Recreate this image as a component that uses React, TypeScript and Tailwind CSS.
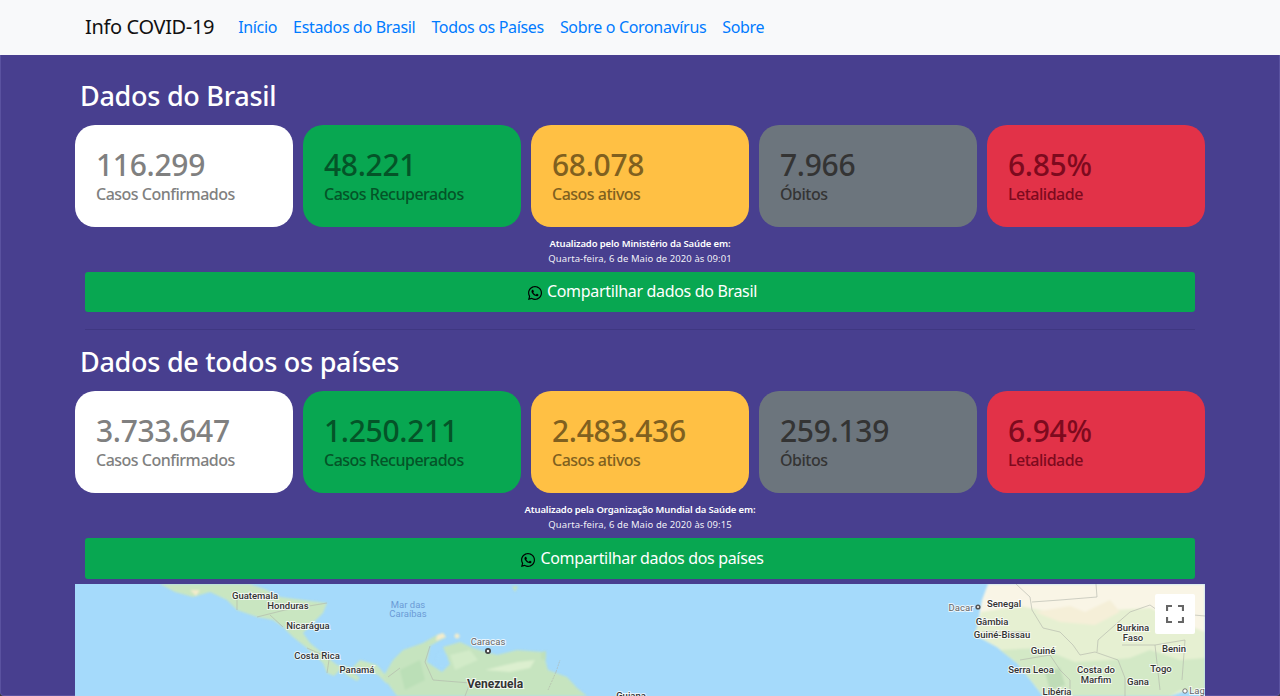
import { FaWhatsapp } from "react-icons/fa";

const FONT = "font-['Noto_Sans','Open_Sans',sans-serif]";

type CardData = { value: string; label: string; bg: string; fg: string };

function Card({ value, label, bg, fg }: CardData) {
  return (
    <div className={`flex-1 h-[102px] rounded-[20px] pl-[21px] pt-[20px] ${bg} ${fg}`}>
      <div className="text-[30px] leading-[40px] font-medium tracking-[-0.3px]">{value}</div>
      <div className="text-[16px] leading-[20px] font-medium tracking-[-0.5px] mt-[-1px]">{label}</div>
    </div>
  );
}

function Section({ title, cards, source, date, share, btn }: { title: string; cards: CardData[]; source: string; date: string; share: string; btn: string }) {
  return (
    <section>
      <h2 className="h-[34px] ml-[5px] text-[27px] leading-[34px] font-medium text-white tracking-[-0.28px]">{title}</h2>
      <div className="flex gap-[10px] mt-[12px]">
        {cards.map((c) => (
          <Card key={c.label} {...c} />
        ))}
      </div>
      <div className="mt-[9px] h-[31px] text-center text-white text-[9.5px] leading-[15px]">
        <div className="font-semibold tracking-[-0.12px]">{source}</div>
        <div className="text-white/95 tracking-[0.08px]">{date}</div>
      </div>
      <button className={`mt-[5px] mx-[10px] w-[1110px] ${btn} rounded-[3px] bg-[#08a751] text-white text-[16px] flex items-center justify-center gap-[4px] tracking-[-0.33px] pb-[2px] pl-[4px]`}>
        <FaWhatsapp className="text-black w-[16px] h-[16px] mt-[4px]" />
        {share}
      </button>
    </section>
  );
}

type L = { x: number; y: number; t: string; size?: number; fill?: string; w?: number; halo?: number };

const labels: L[] = [
  { x: 255, y: 595, t: "Guatemala" },
  { x: 288, y: 605.5, t: "Honduras" },
  { x: 308, y: 625.5, t: "Nicarágua" },
  { x: 317, y: 655, t: "Costa Rica" },
  { x: 357, y: 669.5, t: "Panamá" },
  { x: 408, y: 604.5, t: "Mar das", fill: "#6b9bd6", w: 400, halo: 0 },
  { x: 408, y: 613.5, t: "Caraíbas", fill: "#6b9bd6", w: 400, halo: 0 },
  { x: 488, y: 641, t: "Caracas", fill: "#666", w: 400 },
  { x: 495, y: 684, t: "Venezuela", size: 12, w: 700 },
  { x: 631, y: 695.5, t: "Guiana" },
  { x: 1004, y: 603.5, t: "Senegal" },
  { x: 961, y: 607.5, t: "Dacar", fill: "#666", w: 400 },
  { x: 992, y: 621.5, t: "Gâmbia" },
  { x: 1002, y: 634.5, t: "Guiné-Bissau" },
  { x: 1043, y: 650.5, t: "Guiné" },
  { x: 1031, y: 669.5, t: "Serra Leoa" },
  { x: 1096, y: 669.5, t: "Costa do" },
  { x: 1096, y: 679, t: "Marfim" },
  { x: 1057, y: 691.5, t: "Libéria" },
  { x: 1133, y: 627.5, t: "Burkina" },
  { x: 1133, y: 637, t: "Faso" },
  { x: 1174, y: 648.5, t: "Benin" },
  { x: 1161, y: 668.5, t: "Togo" },
  { x: 1138, y: 681.5, t: "Gana" },
  { x: 1197, y: 690.5, t: "Lag", fill: "#666", w: 400 },
];

function MapDrawing() {
  return (
    <svg viewBox="75 584 1130 112" className="block w-[1130px] h-[112px]">
      <rect x="75" y="584" width="1130" height="112" fill="#a5dafb" />
      <g style={{ filter: "blur(0.8px)" }}>
        {/* Central America */}
        <path d="M160 584 L175 592 L193 597 L210 592 L227 600 L237 610 L257 617 L273 620 L283 627 L293 637 L307 648 L323 663 L327 673 L334 676 L340 670 L350 677 L357 681 L360 678 L350 670 L360 660 L377 665 L387 677 L387 684 L378 675 L366 670 L337 665 L327 657 L310 643 L303 633 L313 623 L323 613 L327 603 L280 597 L267 590 L250 584 Z" fill="#c9e6c1" />
        <path d="M190 590 L196 596 L200 590 Z" fill="#f3eccc" />
        {/* South America */}
        <path d="M383 677 L393 660 L403 650 L423 643 L437 635 L443 633 L446 637 L430 646 L427 662 L436 668 L442 672 L450 664 L443 647 L460 642 L473 648 L497 655 L517 650 L543 652 L548 670 L567 677 L577 688 L587 696 L397 696 Z" fill="#c6e4bf" />
        <ellipse cx="442" cy="660" rx="6" ry="8" fill="#a5dafb" />
        <path d="M437 635 L443 633 L446 637 L436 641 Z" fill="#f3eccc" />
        <circle cx="457" cy="636" r="2.5" fill="#f3eccc" />
        <path d="M400 670 L420 660 L425 680 L405 690 Z" fill="#bbdfb7" />
        <path d="M450 655 L470 650 L478 660 L455 670 Z" fill="#d2ebc8" />
        <path d="M485 670 L510 672 L530 668 L535 660 L518 662 L505 665 Z" fill="#dcefcf" />
        <path d="M541 652 L546 651 L546 660 L541 659 Z" fill="#bfe0bb" />
        <path d="M512 586 L515 592 L518 586 Z" fill="#c3e3bd" />
        {/* West Africa */}
        <path d="M988 584 L982 600 L980 610 L978 623 L975 635 L997 647 L1017 663 L1033 683 L1043 696 L1170 696 L1185 691 L1205 693 L1205 584 Z" fill="#f9f5e6" />
        <path d="M981 612 L1020 606 L1050 612 L1090 620 L1115 610 L1150 608 L1180 622 L1205 632 L1205 694 L1185 691 L1170 696 L1043 696 L1033 683 L1017 663 L997 647 L975 635 Z" fill="#e6f0d2" />
        <path d="M1035 612 L1070 606 L1085 612 L1110 600 L1120 612 L1095 625 L1060 622 Z" fill="#f5efd8" />
        <path d="M1000 650 L1040 648 L1075 662 L1110 660 L1130 658 L1150 650 L1180 660 L1205 658 L1205 690 L1180 690 L1170 696 L1043 696 L1033 683 L1017 663 Z" fill="#d3e9c6" />
        <path d="M1045 672 L1060 668 L1065 685 L1050 690 Z" fill="#bfdcb7" />
        <path d="M1176 696 L1186 692 L1205 693 L1205 696 Z" fill="#a5dafb" />
      </g>
      <g fill="none" stroke="#b0b4aa" strokeWidth="0.6" style={{ filter: "blur(0.3px)" }}>
        <path d="M1016 584 L1030 597 L1032 610 L1043 628 L1060 632 L1073 645 L1080 655 L1095 652 L1118 660 L1125 678 L1125 696" />
        <path d="M1096 584 L1097 597 L1060 600 L1032 602" />
        <path d="M982 632 L1030 632" />
        <path d="M1097 652 L1098 640 L1115 625 L1130 612 L1150 605 L1160 612 L1205 616" />
        <path d="M1122 645 L1155 645 L1160 690" />
        <path d="M1155 645 L1185 640 L1182 680" />
        <path d="M1020 660 L1050 655 L1060 670 L1070 680 L1070 696" />
        <path d="M237 600 L237 610 M257 617 L285 610 L327 603 M283 627 L270 615 M307 648 L327 657 M327 673 L329 660" />
        <path d="M388 677 L400 668 M430 646 L425 662 L433 680 L470 683 L465 696" />
        <path d="M556 672 L548 690 M556 672 L560 660" strokeDasharray="2 1" />
      </g>
      <circle cx="488" cy="651" r="3" fill="#444" />
      <circle cx="488" cy="651" r="1.2" fill="#fff" />
      <circle cx="978" cy="607" r="2.6" fill="#555" />
      <circle cx="978" cy="607" r="1" fill="#fff" />
      <circle cx="1185" cy="691" r="2.2" fill="#fff" stroke="#555" strokeWidth="0.8" />
      {labels.map((l) => (
        <text
          key={l.t}
          x={l.x}
          y={l.y}
          textAnchor="middle"
          dominantBaseline="central"
          fontFamily="Roboto, sans-serif"
          fontSize={l.size ?? 9.5}
          fontWeight={l.w ?? 500}
          fill={l.fill ?? "#333"}
          stroke="#fff"
          strokeOpacity={0.75}
          strokeWidth={l.halo ?? 2}
          paintOrder="stroke"
        >
          {l.t}
        </text>
      ))}
    </svg>
  );
}

export default function App() {
  const a = "text-[#007bff] text-[16px]";
  const brazil: CardData[] = [
    { value: "116.299", label: "Casos Confirmados", bg: "bg-white", fg: "text-[#808080]" },
    { value: "48.221", label: "Casos Recuperados", bg: "bg-[#08a751]", fg: "text-[#045428]" },
    { value: "68.078", label: "Casos ativos", bg: "bg-[#ffc044]", fg: "text-[#80601f]" },
    { value: "7.966", label: "Óbitos", bg: "bg-[#6c757d]", fg: "text-[#343434]" },
    { value: "6.85%", label: "Letalidade", bg: "bg-[#e23248]", fg: "text-[#7d0a1e]" },
  ];
  const world: CardData[] = [
    { value: "3.733.647", label: "Casos Confirmados", bg: "bg-white", fg: "text-[#808080]" },
    { value: "1.250.211", label: "Casos Recuperados", bg: "bg-[#08a751]", fg: "text-[#045428]" },
    { value: "2.483.436", label: "Casos ativos", bg: "bg-[#ffc044]", fg: "text-[#80601f]" },
    { value: "259.139", label: "Óbitos", bg: "bg-[#6c757d]", fg: "text-[#343434]" },
    { value: "6.94%", label: "Letalidade", bg: "bg-[#e23248]", fg: "text-[#7d0a1e]" },
  ];
  return (
    <div className={`${FONT} h-[696px] overflow-hidden bg-[#3a3a3a]`}>
      <nav className="h-[55px] bg-[#f8f9fa] flex items-center pl-[85px] pb-[2px]">
        <span className="text-[20px] text-[#111] mr-[24px] tracking-[-0.35px]">Info COVID-19</span>
        <div className="flex gap-[16px] tracking-[-0.33px]">
          <a className={a}>Início</a>
          <a className={a}>Estados do Brasil</a>
          <a className={a}>Todos os Países</a>
          <a className={a}>Sobre o Coronavírus</a>
          <a className={a}>Sobre</a>
        </div>
      </nav>
      <div className="h-[641px] bg-[#483f8f] border-x border-b border-[#5a52a0] rounded-b-[4px]">
        <main className="w-[1130px] ml-[74px] pt-[24px]">
          <Section
            title="Dados do Brasil"
            cards={brazil}
            source="Atualizado pelo Ministério da Saúde em:"
            date="Quarta-feira, 6 de Maio de 2020 às 09:01"
            share="Compartilhar dados do Brasil"
            btn="h-[40px]"
          />
          <hr className="mx-[10px] mt-[17px] mb-[15px] border-0 border-t border-[#3f3781]" />
          <Section
            title="Dados de todos os países"
            cards={world}
            source="Atualizado pela Organização Mundial da Saúde em:"
            date="Quarta-feira, 6 de Maio de 2020 às 09:15"
            share="Compartilhar dados dos países"
            btn="h-[41px]"
          />
          <div className="relative mt-[5px]">
            <MapDrawing />
            <div className="absolute top-[10px] right-[10px] w-[40px] h-[40px] bg-white rounded-[2px] flex items-center justify-center">
              <svg viewBox="0 0 18 18" className="w-[18px] h-[18px]" fill="none" stroke="#666" strokeWidth="2.2">
                <path d="M1 6V1H6M12 1H17V6M17 12V17H12M6 17H1V12" />
              </svg>
            </div>
          </div>
        </main>
      </div>
    </div>
  );
}
